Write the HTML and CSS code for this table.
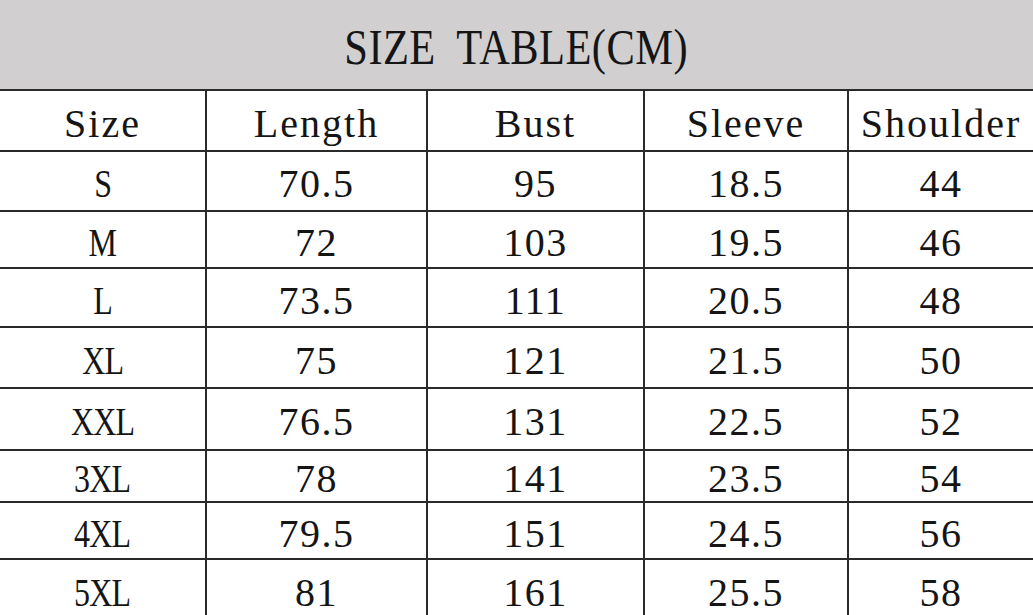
FILE: index.html
```html
<!DOCTYPE html>
<html>
<head>
<meta charset="utf-8">
<link rel="stylesheet" href="styles.css">
</head>
<body>
<div class="sheet">
  <div class="title-band"><span class="title">SIZE TABLE(CM)</span></div>
  <div class="grid">
    <div class="cell head">Size</div><div class="cell head">Length</div><div class="cell head">Bust</div><div class="cell head">Sleeve</div><div class="cell head">Shoulder</div>
    <div class="cell"><span class="label">S</span></div><div class="cell">70.5</div><div class="cell">95</div><div class="cell">18.5</div><div class="cell">44</div>
    <div class="cell"><span class="label">M</span></div><div class="cell">72</div><div class="cell">103</div><div class="cell">19.5</div><div class="cell">46</div>
    <div class="cell"><span class="label">L</span></div><div class="cell">73.5</div><div class="cell">111</div><div class="cell">20.5</div><div class="cell">48</div>
    <div class="cell"><span class="label">XL</span></div><div class="cell">75</div><div class="cell">121</div><div class="cell">21.5</div><div class="cell">50</div>
    <div class="cell"><span class="label">XXL</span></div><div class="cell">76.5</div><div class="cell">131</div><div class="cell">22.5</div><div class="cell">52</div>
    <div class="cell"><span class="label">3XL</span></div><div class="cell">78</div><div class="cell">141</div><div class="cell">23.5</div><div class="cell">54</div>
    <div class="cell"><span class="label">4XL</span></div><div class="cell">79.5</div><div class="cell">151</div><div class="cell">24.5</div><div class="cell">56</div>
    <div class="cell"><span class="label">5XL</span></div><div class="cell">81</div><div class="cell">161</div><div class="cell">25.5</div><div class="cell">58</div>
  </div>
</div>
</body>
</html>
```
FILE: styles.css
```css
html, body {
  margin: 0;
  padding: 0;
  background: #ffffff;
}
body {
  font-family: "Liberation Serif", "Times New Roman", serif;
  color: #151515;
  overflow: hidden;
}
.sheet {
  width: 1033px;
  height: 615px;
  overflow: hidden;
}
.title-band {
  height: 89px;
  background: #d1cfd0;
  display: flex;
  align-items: center;
  justify-content: center;
}
.title {
  display: inline-block;
  font-size: 50px;
  line-height: 1;
  letter-spacing: 0.5px;
  word-spacing: 12px;
  transform: scaleX(0.85);
  color: #151515;
  padding-top: 4px;
}
.grid {
  display: grid;
  grid-template-columns: 205px 219px 215px 202px 1fr;
  grid-template-rows: 59px 58px 55px 57px 59px 60px 50px 55px 60px;
  gap: 2px;
  background: #2a2a2a;
  border-top: 2px solid #2a2a2a;
}
.cell {
  background: #fff;
  display: flex;
  align-items: center;
  justify-content: center;
  font-size: 40px;
  line-height: 1;
  letter-spacing: 1.5px;
  padding-top: 6px;
  box-sizing: border-box;
}
.head {
  letter-spacing: 2px;
}
.label {
  display: inline-block;
  letter-spacing: -1px;
  transform: scaleX(0.8);
}
```
